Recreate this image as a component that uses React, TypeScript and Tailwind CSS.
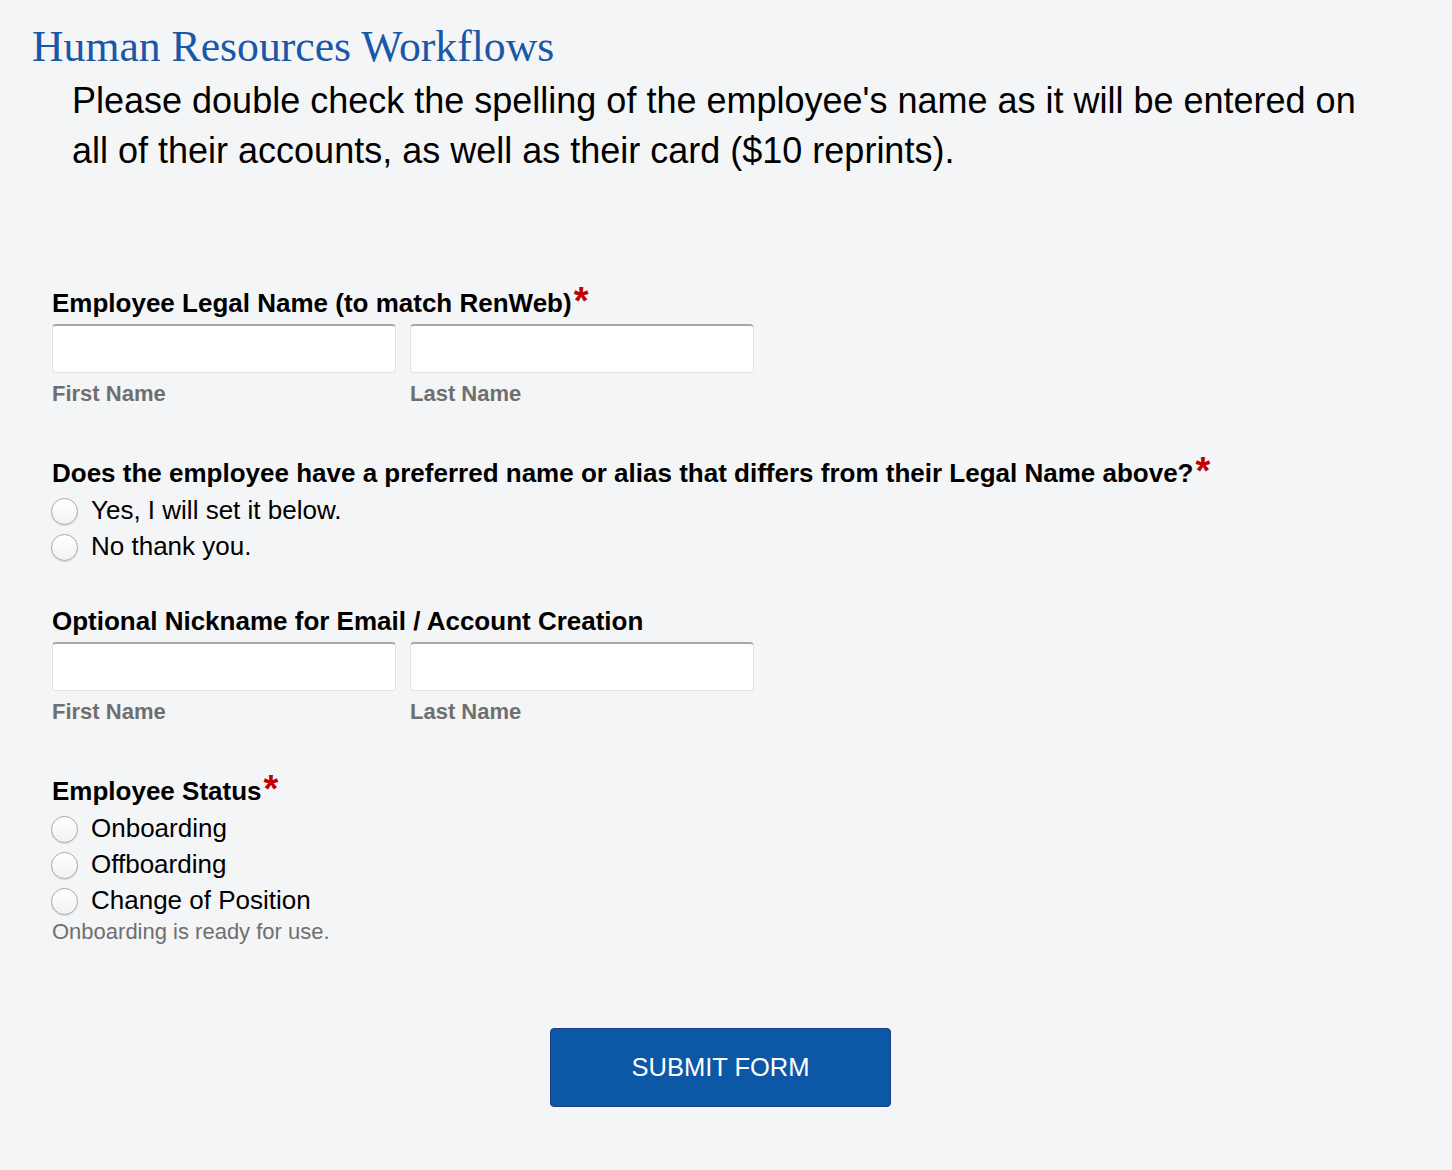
import React from 'react';

const sans = { fontFamily: '"Liberation Sans", Arial, sans-serif' };

function Required() {
  return (
    <span className="inline-block font-bold text-[#c00000] text-[38px] leading-[30px] h-[30px] align-top relative top-[-2px] ml-[2px]">
      *
    </span>
  );
}

function Radio({ label }: { label: string }) {
  return (
    <label className="flex items-center h-[36px] cursor-pointer">
      <span className="w-[27px] h-[27px] rounded-full border border-[#a9a9a9] bg-gradient-to-b from-white to-[#f2f2f2] shadow-[0_1px_1px_rgba(0,0,0,0.12)] shrink-0" />
      <span className="ml-[13px] text-[26px] leading-[30px] text-black -mt-[3px]">{label}</span>
    </label>
  );
}

function NameFields() {
  return (
    <div className="flex gap-[14px] mt-[6px]">
      {['First Name', 'Last Name'].map(n => (
        <div key={n} className="w-[344px]">
          <input
            type="text"
            className="w-full h-[49px] bg-white border border-[#e2e2e2] border-t-[#a9a9a9] border-t-2 rounded-[4px] outline-none"
          />
          <div className="mt-[8px] text-[22px] leading-[26px] font-bold text-[#6f6f6f]">{n}</div>
        </div>
      ))}
    </div>
  );
}

export default function App() {
  return (
    <div className="min-h-[1170px] bg-[#f4f5f7] pt-[20px]" style={sans}>
      <h1
        className="pl-[32px] text-[43.7px] leading-[52px] text-[#1a57a6]"
        style={{ fontFamily: '"Liberation Serif", "Times New Roman", serif' }}
      >
        Human Resources Workflows
      </h1>
      <p className="mt-[4px] ml-[72px] w-[1320px] text-[36px] leading-[50px] text-black">
        Please double check the spelling of the employee's name as it will be entered on all of their accounts, as well as their card ($10 reprints).
      </p>

      <form className="pl-[52px] pt-[112px]">
        <div className="text-[26px] font-bold text-black leading-[30px]">
          Employee Legal Name (to match RenWeb)<Required />
        </div>
        <NameFields />

        <div className="mt-[51px] text-[26px] font-bold text-black leading-[30px]">
          Does the employee have a preferred name or alias that differs from their Legal Name above?<Required />
        </div>
        <div className="mt-[5px] -ml-[1px]">
          <Radio label="Yes, I will set it below." />
          <Radio label="No thank you." />
        </div>

        <div className="mt-[41px] text-[26px] font-bold text-black leading-[30px]">
          Optional Nickname for Email / Account Creation
        </div>
        <NameFields />

        <div className="mt-[51px] text-[26px] font-bold text-black leading-[30px]">
          Employee Status<Required />
        </div>
        <div className="mt-[5px] -ml-[1px]">
          <Radio label="Onboarding" />
          <Radio label="Offboarding" />
          <Radio label="Change of Position" />
        </div>
        <div className="text-[22px] text-[#6f6f6f] leading-[26px]">Onboarding is ready for use.</div>

        <div className="flex justify-center pr-[63px] mt-[83px]">
          <button
            type="button"
            className="w-[341px] h-[79px] bg-[#0d57a7] border border-[#1f3f82] rounded-[4px] text-white text-[25.5px]"
          >
            SUBMIT FORM
          </button>
        </div>
      </form>
    </div>
  );
}
